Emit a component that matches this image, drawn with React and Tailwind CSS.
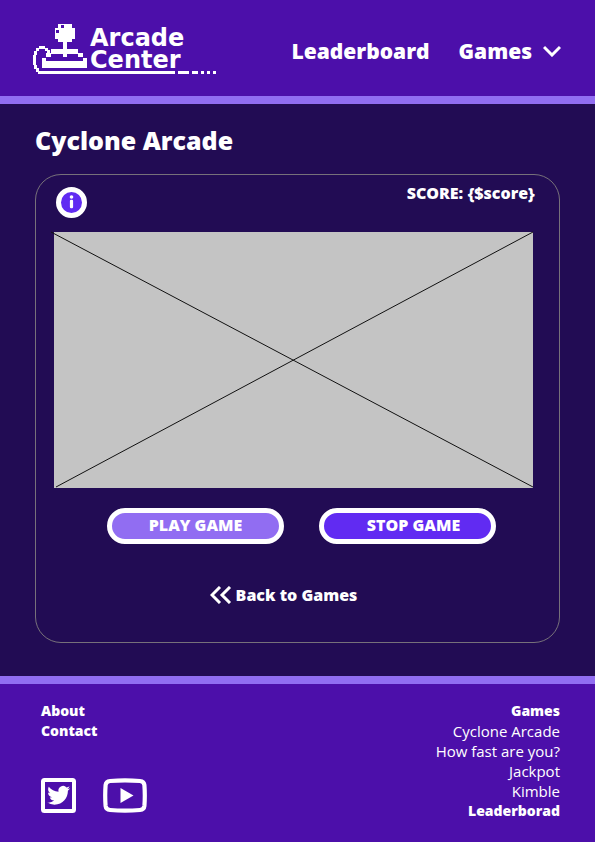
import React from "react";

const gameLinks = ["Cyclone Arcade", "How fast are you?", "Jackpot", "Kimble"];

function Joystick() {
  return (
    <svg viewBox="0 0 184 50" className="absolute inset-0 h-[50px] w-[184px]" fill="#fff" shapeRendering="crispEdges" aria-hidden="true">
      <path d="M25 0h14v4h3v11h-3v3H25v-3h-3V4h3z" />
      <path d="M30 18h4v15h-4zM18 25h27v5H18zM13 29h5v4h-5zM45 29h5v4h-5z" />
      <path d="M9 34h4v3h37v-3h4v10H9z" />
      <path d="M28 1h3v3h-3zM23 6h3v3h-3z" fill="#4c0faa" />
      <path d="M6 22h6v2h3v2h2v3h-3v-2h-2v-2H6v2H4v4H3v10h1v3h2v3h136v3H5v-2H3v-3H1v-4H0V31h1v-4h2v-3h3z" />
      <path d="M145 47h11v3h-11zM159 47h6v3h-6zM168 47h3v3h-3zM174 47h3v3h-3zM180 47h3v3h-3z" />
    </svg>
  );
}

function Logo() {
  return (
    <a href="#" className="relative flex h-[50px] w-[184px] shrink-0 justify-end">
      <Joystick />
      <span className="flex w-[127px] flex-col pt-[3px] font-['DejaVu_Sans',sans-serif] text-[24px] leading-[22px] font-bold">
        <span>Arcade</span>
        <span>Center</span>
      </span>
    </a>
  );
}

export default function App() {
  return (
    <div className="flex min-h-screen flex-col bg-[#220c54] font-['Open_Sans','Noto_Sans',sans-serif] text-white">
      <header className="flex items-center justify-between border-b-8 border-[#916df2] bg-[#4c0faa] pt-6 pr-[34px] pb-[22px] pl-[33px]">
        <Logo />
        <nav className="mt-1 flex items-center gap-[29px] text-[21px] leading-[30px] font-extrabold">
          <a href="#leaderboard">Leaderboard</a>
          <button type="button" className="flex items-center gap-[11px]">
            Games
            <svg viewBox="0 0 18 12" className="h-3 w-[18px]" fill="none" stroke="#fff" strokeWidth="3" aria-hidden="true">
              <path d="M1 2l8 8 8-8" />
            </svg>
          </button>
        </nav>
      </header>

      <main className="grow px-[35px] pt-5 pb-[33px]">
        <h1 className="text-[25px] leading-8 font-extrabold">Cyclone Arcade</h1>

        <section className="mt-[18px] rounded-[26px] border border-[#77717a] pt-3 pr-[26px] pb-[35px] pl-[18px]">
          <div className="-mr-[2px] flex h-[45px] items-start justify-between pl-[2px]">
            <button
              type="button"
              aria-label="Game info"
              className="flex size-[31px] items-center justify-center rounded-full border-[5px] border-white bg-[#612bf2]"
            >
              <svg viewBox="0 0 21 21" className="h-[21px] w-[21px] shrink-0" fill="#fff" aria-hidden="true">
                <circle cx="10.5" cy="5" r="1.800" />
                <rect x="8.900" y="7.800" width="3.200" height="8.500" rx="1.200" />
              </svg>
            </button>
            <p className="-mt-1 text-[16px] leading-5 font-extrabold">SCORE: {"{$score}"}</p>
          </div>

          <div className="aspect-[479/256] bg-[#c4c4c4]">
            <svg viewBox="0 0 479 256" className="size-full overflow-visible" stroke="#111" strokeWidth="1" aria-hidden="true">
              <path d="M-3 0L479 255M2 255L479 0" />
            </svg>
          </div>

          <div className="mt-5 flex justify-center gap-[35px] pl-4 text-[16px] leading-6 font-extrabold">
            <button type="button" className="h-9 w-[177px] rounded-full border-[5px] border-white bg-[#916df2] pb-[2px]">
              PLAY GAME
            </button>
            <button type="button" className="h-9 w-[177px] rounded-full border-[5px] border-white bg-[#612bf2] pb-[2px] pl-3">
              STOP GAME
            </button>
          </div>

          <div className="mt-[39px] flex justify-center pr-5">
            <a href="#games" className="flex items-center gap-1 text-[16px] leading-6 font-extrabold">
              <svg viewBox="0 0 22 18" className="h-[18px] w-[22px]" fill="none" stroke="#fff" strokeWidth="3" aria-hidden="true">
                <path d="M10 1L2 9l8 8M20 1l-8 8 8 8" />
              </svg>
              Back to Games
            </a>
          </div>
        </section>
      </main>

      <footer className="flex justify-between border-t-8 border-[#916df2] bg-[#4c0faa] pt-[17px] pr-[35px] pb-[21px] pl-[41px] leading-5">
        <div className="flex flex-col justify-between pb-2">
          <nav className="flex flex-col text-[14px] leading-5 font-extrabold">
            <a href="#about">About</a>
            <a href="#contact">Contact</a>
          </nav>
          <div className="flex gap-[27px]">
            <a href="#twitter" aria-label="Twitter">
              <svg viewBox="0 0 35 35" className="size-[35px]" aria-hidden="true">
                <rect x="2" y="2" width="31" height="31" rx="1.500" fill="none" stroke="#fff" strokeWidth="4" />
                <path
                  transform="translate(6.200 5.800) scale(.96)"
                  fill="#fff"
                  d="M23.950 4.570a10 10 0 0 1-2.820.770 4.960 4.960 0 0 0 2.160-2.720c-.950.550-2 .950-3.120 1.180a4.920 4.920 0 0 0-8.380 4.480C7.690 8.090 4.070 6.130 1.640 3.160a4.820 4.820 0 0 0-.670 2.480c0 1.710.870 3.210 2.190 4.100a4.900 4.900 0 0 1-2.230-.620v.060a4.920 4.920 0 0 0 3.950 4.830 5 5 0 0 1-2.210.080 4.940 4.940 0 0 0 4.600 3.420A9.870 9.870 0 0 1 0 19.540a14 14 0 0 0 7.550 2.210c9.050 0 14-7.500 14-13.980 0-.210 0-.420-.020-.630a9.940 9.940 0 0 0 2.460-2.550z"
                />
              </svg>
            </a>
            <a href="#youtube" aria-label="YouTube">
              <svg viewBox="0 0 44 35" className="h-[35px] w-11" aria-hidden="true">
                <path
                  d="M7 3Q22 1.600 37 3q4 .400 4.400 4 .800 10.500 0 21-.400 3.600-4.400 4-15 1.400-30 0-4-.400-4.400-4-.800-10.500 0-21Q3 3.400 7 3z"
                  fill="none"
                  stroke="#fff"
                  strokeWidth="4.200"
                />
                <path d="M17.500 10v15L30.500 17.500z" fill="#fff" />
              </svg>
            </a>
          </div>
        </div>

        <nav className="flex flex-col text-right text-[14px] leading-5">
          <a href="#games" className="font-extrabold">Games</a>
          {gameLinks.map((name) => (
            <a key={name} href="#game" className="text-[15px] leading-5">{name}</a>
          ))}
          <a href="#leaderboard" className="font-extrabold">Leaderborad</a>
        </nav>
      </footer>
    </div>
  );
}
